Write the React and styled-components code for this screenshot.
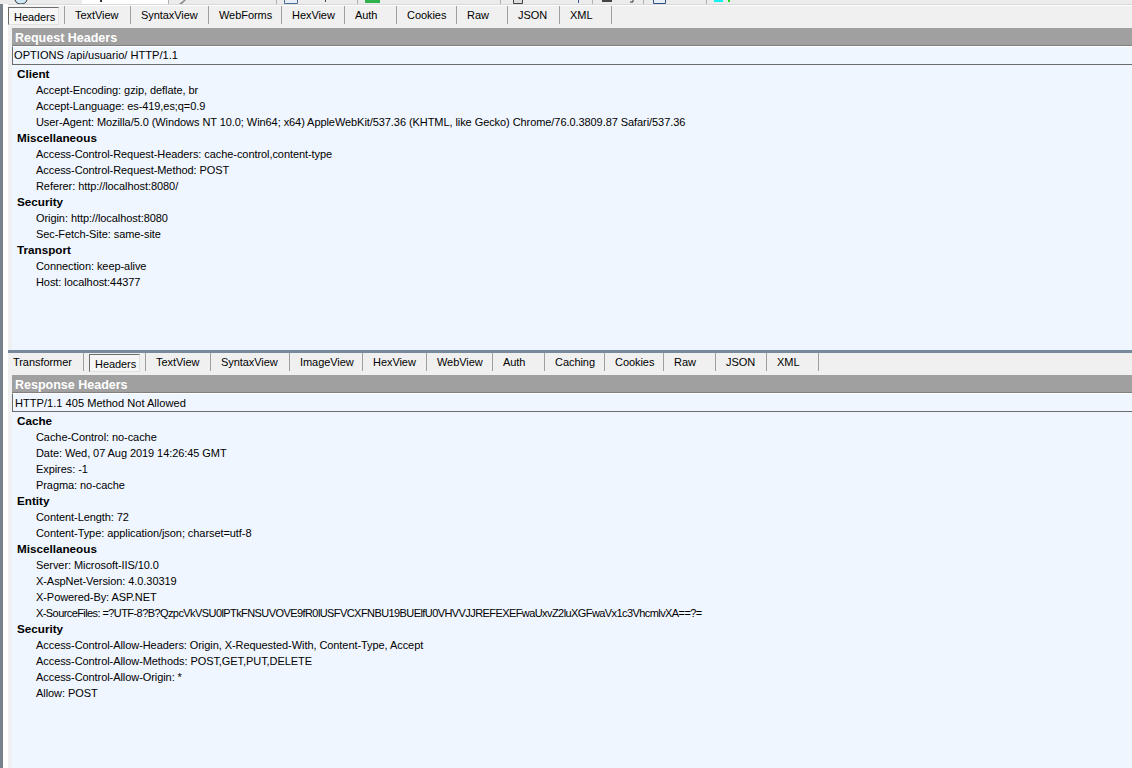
import React from 'react';
import styled, { createGlobalStyle } from 'styled-components';

const Global = createGlobalStyle`
  html, body {
    margin: 0;
    padding: 0;
    background: #fff;
    overflow: hidden;
  }
  #root {
    height: 768px;
  }
`

const Page = styled.div`
  display: flex;
  width: 1132px;
  height: 768px;
  overflow: hidden;
  font-family: "Liberation Sans", Arial, sans-serif;
  font-size: 11px;
  color: #000;
`
const Rail = styled.div`
  width: 3px;
  background: #78828c;
  margin-right: 5px;
  flex: none;
`
const Main = styled.div`
  flex: 1;
  display: flex;
  flex-direction: column;
  min-width: 0;
`
const TopStrip = styled.div`
  display: flex;
  height: 4px;
  margin-left: -8px;
  padding-left: 8px;
  overflow: hidden;
  background: #ececec;
  flex: none;
`
const TopTab = styled.div`
  flex: none;
  width: ${p => p.$w}px;
  height: 4px;
  box-sizing: border-box;
  background: ${p => p.$active ? '#fff' : 'transparent'};
  border-right: ${p => p.$plain ? 'none' : '1px solid #b0b0b0'};
  svg { display: block; }
`
const StripEdge = styled.div`
  height: 2px;
  flex: none;
  background: linear-gradient(#d8d8d8 50%, #fff 50%);
`
const Pane = styled.div`
  height: ${p => p.$h}px;
  flex: ${p => p.$grow ? 1 : 'none'};
  display: flex;
  flex-direction: column;
  background: #f0f0f0;
  overflow: hidden;
`
const Splitter = styled.div`
  height: 3px;
  flex: none;
  background: #78899b;
`
const TabBar = styled.div`
  display: flex;
  height: 22px;
  flex: none;
`
const Tab = styled.div`
  flex: none;
  width: ${p => p.$w}px;
  height: 18px;
  box-sizing: border-box;
  padding-left: ${p => p.$pad}px;
  line-height: 19px;
  font-size: 11px;
  letter-spacing: -0.06px;
  border-right: 1px solid #a0a0a0;
  white-space: nowrap;
`
const ActiveTab = styled(Tab)`
  display: flex;
  padding: 0 5px 0 ${p => p.$offset}px;
  span {
    display: block;
    flex: 1;
    height: 18px;
    box-sizing: border-box;
    padding-left: 5px;
    margin-top: 1px;
    line-height: 19px;
    background: #f6f6f6;
    border: 1px solid;
    border-color: #6c6c6c #e0e0e0 #e0e0e0 #6c6c6c;
  }
`
const Section = styled.div`
  flex: 1;
  display: flex;
  flex-direction: column;
  margin-left: 4px;
  background: #f0f6ff;
  min-height: 0;
`
const SectionTitle = styled.div`
  height: 18px;
  flex: none;
  box-sizing: border-box;
  padding-left: 3px;
  background: #a0a0a0;
  border-bottom: 1px solid #808080;
  color: #fff;
  font-weight: bold;
  font-size: 12.5px;
  line-height: 20px;
`
const StartLine = styled.div`
  height: 19px;
  flex: none;
  box-sizing: border-box;
  padding-left: ${p => p.$pad}px;
  border-top: 1px solid #fff;
  border-left: 1px solid #6c6c6c;
  border-bottom: 1px solid #6c6c6c;
  font-size: 11.1px;
  line-height: ${p => p.$line}px;
  white-space: nowrap;
`
const GroupList = styled.div`
  padding: 1px 0 0 5px;
`
const GroupName = styled.div`
  height: 16px;
  line-height: 16px;
  font-weight: bold;
  font-size: 11.7px;
`
const Header = styled.div`
  height: 16px;
  line-height: 16px;
  font-size: 11px;
  letter-spacing: ${p => p.$tight ? '-0.58px' : '-0.07px'};
  padding-left: 19px;
  white-space: nowrap;
`

const requestTabs = [
  ['TextView', 66], ['SyntaxView', 78], ['WebForms', 73], ['HexView', 63], ['Auth', 52],
  ['Cookies', 60], ['Raw', 51], ['JSON', 52], ['XML', 52],
]

const responseTabs = [
  ['TextView', 65], ['SyntaxView', 79], ['ImageView', 73], ['HexView', 64], ['WebView', 66], ['Auth', 52],
  ['Caching', 60], ['Cookies', 59], ['Raw', 52], ['JSON', 51], ['XML', 52],
]

const requestGroups = [
  { name: 'Client', items: [
    'Accept-Encoding: gzip, deflate, br',
    'Accept-Language: es-419,es;q=0.9',
    'User-Agent: Mozilla/5.0 (Windows NT 10.0; Win64; x64) AppleWebKit/537.36 (KHTML, like Gecko) Chrome/76.0.3809.87 Safari/537.36',
  ] },
  { name: 'Miscellaneous', items: [
    'Access-Control-Request-Headers: cache-control,content-type',
    'Access-Control-Request-Method: POST',
    'Referer: http://localhost:8080/',
  ] },
  { name: 'Security', items: [
    'Origin: http://localhost:8080',
    'Sec-Fetch-Site: same-site',
  ] },
  { name: 'Transport', items: [
    'Connection: keep-alive',
    'Host: localhost:44377',
  ] },
]

const responseGroups = [
  { name: 'Cache', items: [
    'Cache-Control: no-cache',
    'Date: Wed, 07 Aug 2019 14:26:45 GMT',
    'Expires: -1',
    'Pragma: no-cache',
  ] },
  { name: 'Entity', items: [
    'Content-Length: 72',
    'Content-Type: application/json; charset=utf-8',
  ] },
  { name: 'Miscellaneous', items: [
    'Server: Microsoft-IIS/10.0',
    'X-AspNet-Version: 4.0.30319',
    'X-Powered-By: ASP.NET',
    'X-SourceFiles: =?UTF-8?B?QzpcVkVSU0lPTkFNSUVOVE9fR0lUSFVCXFNBU19BUElfU0VHVVJJREFEXEFwaUxvZ2luXGFwaVx1c3VhcmlvXA==?=',
  ] },
  { name: 'Security', items: [
    'Access-Control-Allow-Headers: Origin, X-Requested-With, Content-Type, Accept',
    'Access-Control-Allow-Methods: POST,GET,PUT,DELETE',
    'Access-Control-Allow-Origin: *',
    'Allow: POST',
  ] },
]

function Groups({ groups }) {
  return (
    <GroupList>
      {groups.map(g => (
        <div key={g.name}>
          <GroupName>{g.name}</GroupName>
          {g.items.map(i => <Header key={i} $tight={i.startsWith('X-SourceFiles')}>{i}</Header>)}
        </div>
      ))}
    </GroupList>
  )
}

// what is left of the toolbar icons cut off by the top edge of the capture
const Clip = ({ w, children }) => (
  <svg width={w} height="4" viewBox={`0 0 ${w} 4`}>{children}</svg>
)

function ClippedToolbar() {
  return (
    <TopStrip>
      <TopTab $w={74} $plain>
        <Clip w={74}>
          <path d="M7 0c1 3 3 4 6 4s5-1 6-4" fill="#cfe8f5" stroke="#333" strokeWidth="1" />
        </Clip>
      </TopTab>
      <TopTab $w={87} $active>
        <Clip w={87}><rect x="18" y="0" width="2" height="2" fill="#333" /></Clip>
      </TopTab>
      <TopTab $w={108}>
        <Clip w={108}><path d="M10 4l5-4h2l-4 4z" fill="#8a8a8a" /></Clip>
      </TopTab>
      <TopTab $w={81}>
        <Clip w={81}>
          <path d="M7.5 0v3.5h13V0" fill="#e8eef6" stroke="#4a6c96" />
          <rect x="48" y="0" width="1" height="2" fill="#345" />
        </Clip>
      </TopTab>
      <TopTab $w={143}>
        <Clip w={143}>
          <rect x="7" y="0" width="15" height="3" fill="#2fb24c" />
        </Clip>
      </TopTab>
      <TopTab $w={92}>
        <Clip w={92}>
          <path d="M12.5 0v3.5h9V0" fill="#ddd" stroke="#444" />
          <rect x="77" y="0" width="1" height="3" fill="#3a5a9a" />
        </Clip>
      </TopTab>
      <TopTab $w={51}>
        <Clip w={51}>
          <rect x="9" y="0" width="10" height="2" fill="#444" />
          <path d="M37 2h3v-2" fill="none" stroke="#333" />
        </Clip>
      </TopTab>
      <TopTab $w={63}>
        <Clip w={63}>
          <path d="M9.5 0v3.5h12V0" fill="#e8eef6" stroke="#2f5584" />
        </Clip>
      </TopTab>
      <TopTab $w={60} $plain>
        <Clip w={60}>
          <rect x="7" y="0" width="9" height="2" fill="#12f0f0" />
          <rect x="21" y="0" width="2" height="2" fill="#12e012" />
        </Clip>
      </TopTab>
    </TopStrip>
  )
}

export default function App() {
  return (
    <Page>
      <Global />
      <Rail />
      <Main>
        <ClippedToolbar />
        <StripEdge />
        <Pane $h={344}>
          <TabBar>
            <ActiveTab $w={57} $offset={0}><span>Headers</span></ActiveTab>
            {requestTabs.map(([t, w]) => <Tab key={t} $w={w} $pad={10}>{t}</Tab>)}
          </TabBar>
          <Section>
            <SectionTitle>Request Headers</SectionTitle>
            <StartLine $pad={1} $line={17}>OPTIONS /api/usuario/ HTTP/1.1</StartLine>
            <Groups groups={requestGroups} />
          </Section>
        </Pane>
        <Splitter />
        <Pane $grow>
          <TabBar>
            <Tab $w={76} $pad={5}>Transformer</Tab>
            <ActiveTab $w={62} $offset={5}><span>Headers</span></ActiveTab>
            {responseTabs.map(([t, w]) => <Tab key={t} $w={w} $pad={10}>{t}</Tab>)}
          </TabBar>
          <Section>
            <SectionTitle>Response Headers</SectionTitle>
            <StartLine $pad={2} $line={18}>HTTP/1.1 405 Method Not Allowed</StartLine>
            <Groups groups={responseGroups} />
          </Section>
        </Pane>
      </Main>
    </Page>
  )
}
